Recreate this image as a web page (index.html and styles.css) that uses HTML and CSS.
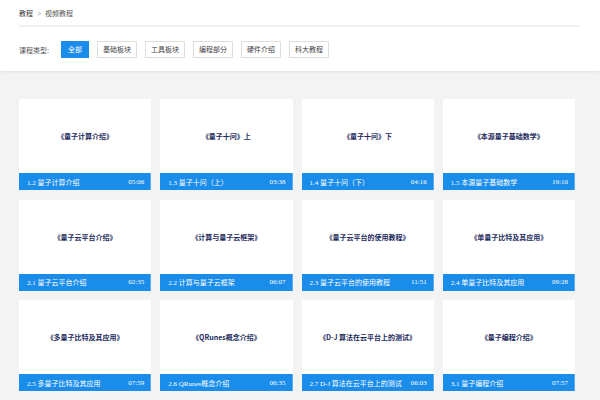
FILE: index.html
```html
<!DOCTYPE html>
<html lang="zh-CN">
<head>
<meta charset="utf-8">
<title>视频教程</title>
<link rel="stylesheet" href="styles.css">
</head>
<body>
<header class="top">
  <div class="crumbs"><span class="crumb">教程</span><span class="sep">&gt;</span><span class="crumb cur">视频教程</span></div>
  <div class="filters">
    <span class="label">课程类型:</span>
    <span class="btn active">全部</span>
    <span class="btn">基础板块</span>
    <span class="btn">工具板块</span>
    <span class="btn">编程部分</span>
    <span class="btn">硬件介绍</span>
    <span class="btn">科大教程</span>
  </div>
</header>
<main class="grid">
  <div class="card"><div class="cover">《量子计算介绍》</div><div class="bar"><span>1.2 量子计算介绍</span><span>05:06</span></div></div>
  <div class="card"><div class="cover">《量子十问》上</div><div class="bar"><span>1.3 量子十问（上）</span><span>03:38</span></div></div>
  <div class="card"><div class="cover">《量子十问》下</div><div class="bar"><span>1.4 量子十问（下）</span><span>04:16</span></div></div>
  <div class="card"><div class="cover">《本源量子基础数学》</div><div class="bar"><span>1.5 本源量子基础数学</span><span>19:10</span></div></div>
  <div class="card"><div class="cover">《量子云平台介绍》</div><div class="bar"><span>2.1 量子云平台介绍</span><span>02:35</span></div></div>
  <div class="card"><div class="cover">《计算与量子云框架》</div><div class="bar"><span>2.2 计算与量子云框架</span><span>06:07</span></div></div>
  <div class="card"><div class="cover">《量子云平台的使用教程》</div><div class="bar"><span>2.3 量子云平台的使用教程</span><span>11:51</span></div></div>
  <div class="card"><div class="cover">《单量子比特及其应用》</div><div class="bar"><span>2.4 单量子比特及其应用</span><span>09:28</span></div></div>
  <div class="card"><div class="cover">《多量子比特及其应用》</div><div class="bar"><span>2.5 多量子比特及其应用</span><span>07:59</span></div></div>
  <div class="card"><div class="cover">《QRunes概念介绍》</div><div class="bar"><span>2.6 QRunes概念介绍</span><span>06:35</span></div></div>
  <div class="card"><div class="cover">《D-J 算法在云平台上的测试》</div><div class="bar"><span>2.7 D-J 算法在云平台上的测试</span><span>06:03</span></div></div>
  <div class="card"><div class="cover">《量子编程介绍》</div><div class="bar"><span>3.1 量子编程介绍</span><span>07:57</span></div></div>
</main>
</body>
</html>
```
FILE: styles.css
```css
html, body {
  margin: 0;
  padding: 0;
}
body {
  background: #f3f3f3;
  font-family: "Noto Sans CJK SC", "Noto Sans", sans-serif;
  width: 600px;
  height: 400px;
  overflow: hidden;
}
.top {
  background: #fff;
  padding: 0 20px 13px 19px;
  box-shadow: 0 1px 3px rgba(0, 0, 0, 0.08);
  position: relative;
}
.crumbs {
  height: 24px;
  display: flex;
  align-items: center;
  gap: 4px;
  font-size: 7px;
  color: #333;
  border-bottom: 2px solid #f0f0f0;
  padding-top: 1px;
}
.crumbs .sep {
  color: #999;
  font-family: "Liberation Sans", sans-serif;
}
.crumbs .cur {
  color: #555;
}
.filters {
  display: flex;
  align-items: center;
  margin-top: 14px;
  font-size: 7px;
}
.label {
  color: #555;
  width: 42px;
}
.btn {
  height: 15px;
  line-height: 15px;
  padding: 0 5px;
  border: 1px solid #dedede;
  color: #444;
  margin-right: 8px;
  background: #fff;
}
.btn.active {
  background: #1a8cea;
  border-color: #1a8cea;
  color: #fff;
  padding: 0 6px;
}
.grid {
  display: grid;
  grid-template-columns: repeat(4, 1fr);
  column-gap: 9px;
  row-gap: 9.5px;
  width: 556px;
  margin: 28px 0 0 19px;
}
.card {
  height: 91px;
  background: #fff;
  display: flex;
  flex-direction: column;
}
.cover {
  flex: 1;
  display: flex;
  align-items: center;
  justify-content: center;
  font-size: 7px;
  font-weight: bold;
  color: #1c2a5c;
}
.bar {
  height: 17px;
  background: #1a8cea;
  color: #fff;
  display: flex;
  align-items: center;
  justify-content: space-between;
  padding: 0 7px 0 8px;
  font-size: 7px;
  font-family: "Liberation Serif", "Noto Sans CJK SC", serif;
  box-shadow: inset -1px 0 0 #5aaef0;
}
```
